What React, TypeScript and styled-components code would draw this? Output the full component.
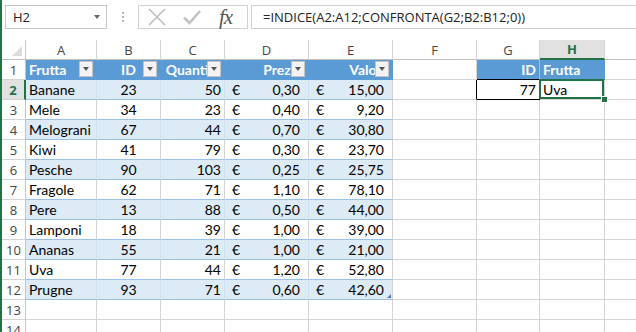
import styled, { createGlobalStyle } from 'styled-components';

const GREEN = '#217346';
const BLUE = '#5b9bd5';
const BAND = '#ddebf7';
const BAND_SIDE = '#cfe0f1';
const LINE = '#9bc2e6';
const GRID = '#d4d4d4';

const GlobalStyle = createGlobalStyle`
  html, body {
    margin: 0;
    padding: 0;
    background: #fff;
  }
  body {
    font-family: Lato, 'Liberation Sans', sans-serif;
  }
`;

type Align = 'left' | 'center' | 'right';

const Window = styled.div`
  width: 636px;
  height: 332px;
  box-sizing: border-box;
  border-left: 2px solid ${GREEN};
  overflow: hidden;
  display: flex;
  flex-direction: column;
  background: #fff;
`;

const FormulaBar = styled.div`
  height: 40px;
  flex-shrink: 0;
  display: flex;
  align-items: flex-start;
  padding: 5px 0 0 3px;
  box-sizing: border-box;
`;

const NameBox = styled.div`
  width: 102px;
  height: 24px;
  box-sizing: border-box;
  border: 1px solid #c6c6c6;
  display: flex;
  align-items: center;
  justify-content: space-between;
  padding: 0 6px 0 7px;
  font-family: 'Open Sans', sans-serif;
  font-size: 13px;
  color: #222;
`;

const Caret = styled.span`
  width: 0;
  height: 0;
  border-left: 3.5px solid transparent;
  border-right: 3.5px solid transparent;
  border-top: 4px solid #666;
`;

const Grip = styled.div`
  width: 31px;
  height: 24px;
  display: flex;
  flex-direction: column;
  align-items: center;
  justify-content: center;
  gap: 2px;

  span {
    width: 2px;
    height: 2px;
    background: #b8b8b8;
  }
`;

const FuncBox = styled.div`
  width: 110px;
  height: 24px;
  box-sizing: border-box;
  border: 1px solid #d0d0d0;
  display: flex;
  align-items: center;
  padding: 0 8px 0 8px;
  gap: 15px;
`;

const Fx = styled.span`
  font-family: 'Liberation Serif', serif;
  font-style: italic;
  font-size: 21px;
  color: #555;
  letter-spacing: -1px;
  margin-left: 2px;
  line-height: 20px;
`;

const FormulaInput = styled.div`
  flex: 1;
  height: 24px;
  margin-left: 3px;
  box-sizing: border-box;
  border: 1px solid #d0d0d0;
  border-right: none;
  padding-left: 11px;
  display: flex;
  align-items: center;
  font-family: 'Open Sans', sans-serif;
  font-size: 13px;
  color: #222;
  white-space: nowrap;
`;

const Sheet = styled.div`
  display: grid;
  grid-template-columns: 24px 71px 64px 64px 84px 84px 84px 63px 65px 64px;
  grid-auto-rows: 20px;
`;

const Corner = styled.div`
  position: relative;
  box-sizing: border-box;
  border-right: 1px solid #c6c6c6;
  border-bottom: 1px solid #bfbfbf;

  &::after {
    content: '';
    position: absolute;
    right: 3px;
    bottom: 3px;
    border-left: 10px solid transparent;
    border-bottom: 10px solid #dcdcdc;
  }
`;

const ColHead = styled.div<{ $active?: boolean }>`
  box-sizing: border-box;
  border-right: 1px solid ${GRID};
  border-bottom: ${({ $active }) => ($active ? `2px solid ${GREEN}` : '1px solid #bfbfbf')};
  background: ${({ $active }) => ($active ? '#e1e1e1' : '#fff')};
  color: ${({ $active }) => ($active ? GREEN : '#444')};
  font-weight: ${({ $active }) => ($active ? 700 : 400)};
  font-family: 'Open Sans', sans-serif;
  font-size: 13px;
  display: flex;
  align-items: center;
  justify-content: center;
`;

const RowHead = styled.div<{ $active?: boolean }>`
  box-sizing: border-box;
  border-right: ${({ $active }) => ($active ? `2px solid ${GREEN}` : '1px solid #c6c6c6')};
  border-bottom: 1px solid ${GRID};
  background: ${({ $active }) => ($active ? '#e1e1e1' : '#fff')};
  color: ${({ $active }) => ($active ? GREEN : '#444')};
  font-weight: ${({ $active }) => ($active ? 700 : 400)};
  font-family: 'Open Sans', sans-serif;
  font-size: 13px;
  display: flex;
  align-items: center;
  justify-content: center;
`;

const Cell = styled.div<{
  $fill?: string;
  $align?: Align;
  $bold?: boolean;
  $color?: string;
  $line?: string;
  $side?: string;
}>`
  position: relative;
  box-sizing: border-box;
  padding: 0 3px;
  border-right: 1px solid ${({ $side }) => $side || GRID};
  border-bottom: 1px solid ${({ $line }) => $line || GRID};
  background: ${({ $fill }) => $fill || '#fff'};
  color: ${({ $color }) => $color || '#000'};
  font-weight: ${({ $bold }) => ($bold ? 700 : 400)};
  font-family: Lato, 'Liberation Sans', sans-serif;
  font-size: 14px;
  line-height: 20px;
  text-align: ${({ $align }) => $align || 'left'};
  white-space: nowrap;
  overflow: hidden;
`;

const MoneyCell = styled(Cell)<{ $handle?: boolean }>`
  display: flex;
  justify-content: space-between;
  padding: 0 8px 0 7px;
  overflow: visible;

  ${({ $handle }) =>
    $handle &&
    `
    &::after {
      content: '';
      position: absolute;
      right: 1px;
      bottom: 1px;
      border-left: 4px solid transparent;
      border-bottom: 4px solid #4a76b0;
    }
  `}
`;

const SelectedCell = styled(Cell)`
  overflow: visible;

  &::after {
    content: '';
    position: absolute;
    top: -1px;
    left: -1px;
    right: 0;
    bottom: 0;
    border: 2px solid ${GREEN};
    z-index: 2;
  }

  &::before {
    content: '';
    position: absolute;
    right: -4px;
    bottom: -4px;
    width: 5px;
    height: 5px;
    background: ${GREEN};
    border: 1px solid #fff;
    z-index: 3;
  }
`;

const FilterBtn = styled.span`
  position: absolute;
  right: 3px;
  top: 1px;
  width: 14px;
  height: 16px;
  box-sizing: border-box;
  background: #f3f3f3;
  border: 1px solid #c4c4c4;
  display: flex;
  align-items: center;
  justify-content: center;

  &::after {
    content: '';
    border-left: 3.5px solid transparent;
    border-right: 3.5px solid transparent;
    border-top: 4px solid #555;
  }
`;

type Fruit = [string, number, number, string, string];

const fruits: Fruit[] = [
  ['Banane', 23, 50, '0,30', '15,00'],
  ['Mele', 34, 23, '0,40', '9,20'],
  ['Melograni', 67, 44, '0,70', '30,80'],
  ['Kiwi', 41, 79, '0,30', '23,70'],
  ['Pesche', 90, 103, '0,25', '25,75'],
  ['Fragole', 62, 71, '1,10', '78,10'],
  ['Pere', 13, 88, '0,50', '44,00'],
  ['Lamponi', 18, 39, '1,00', '39,00'],
  ['Ananas', 55, 21, '1,00', '21,00'],
  ['Uva', 77, 44, '1,20', '52,80'],
  ['Prugne', 93, 71, '0,60', '42,60'],
];

const letters = ['A', 'B', 'C', 'D', 'E', 'F', 'G', 'H', ''];

const headers: [string, Align][] = [
  ['Frutta', 'left'],
  ['ID', 'center'],
  ['Quantità', 'right'],
  ['Prezzo', 'right'],
  ['Valore', 'right'],
];

function HeaderRow() {
  return (
    <>
      <RowHead>1</RowHead>
      {headers.map(([label, align]) => (
        <Cell key={label} $fill={BLUE} $side={BLUE} $line={BLUE} $color="#fff" $bold $align={align}>
          {label}
          <FilterBtn />
        </Cell>
      ))}
      <Cell />
      <Cell $fill={BLUE} $side={LINE} $line="#000" $color="#fff" $bold $align="right">ID</Cell>
      <Cell $fill={BLUE} $side={BLUE} $line={BLUE} $color="#fff" $bold>Frutta</Cell>
      <Cell />
    </>
  );
}

function DataRow({ row, fruit }: { row: number; fruit: Fruit }) {
  const [name, id, qty, price, value] = fruit;
  const band = row % 2 === 0;
  const fill = band ? BAND : '#fff';
  const side = band ? BAND_SIDE : GRID;
  const first = row === 2;
  return (
    <>
      <RowHead $active={first}>{row}</RowHead>
      <Cell $fill={fill} $side={side} $line={LINE}>{name}</Cell>
      <Cell $fill={fill} $side={side} $line={LINE} $align="center">{id}</Cell>
      <Cell $fill={fill} $side={side} $line={LINE} $align="right">{qty}</Cell>
      <MoneyCell $fill={fill} $side={side} $line={LINE}>
        <span>€</span>
        <span>{price}</span>
      </MoneyCell>
      <MoneyCell $fill={fill} $line={LINE} $handle={row === 12}>
        <span>€</span>
        <span>{value}</span>
      </MoneyCell>
      <Cell $side={first ? '#000' : GRID} />
      {first ? (
        <Cell $side="#000" $line="#000" $align="right">77</Cell>
      ) : (
        <Cell />
      )}
      {first ? <SelectedCell>Uva</SelectedCell> : <Cell />}
      <Cell />
    </>
  );
}

function EmptyRow({ row }: { row: number }) {
  return (
    <>
      <RowHead>{row}</RowHead>
      {letters.map((l, i) => (
        <Cell key={i} />
      ))}
    </>
  );
}

export default function App() {
  return (
    <>
      <GlobalStyle />
      <Window>
        <FormulaBar>
          <NameBox>
            H2
            <Caret />
          </NameBox>
          <Grip>
            <span />
            <span />
            <span />
          </Grip>
          <FuncBox>
            <svg width="20" height="18" viewBox="0 0 20 18">
              <path d="M2 1 L18 17 M18 1 L2 17" stroke="#bdbdbd" strokeWidth="1.6" fill="none" />
            </svg>
            <svg width="20" height="18" viewBox="0 0 20 18">
              <path d="M2 9.5 L7.5 15 L18 3" stroke="#c4c4c4" strokeWidth="2.6" fill="none" />
            </svg>
            <Fx>fx</Fx>
          </FuncBox>
          <FormulaInput>=INDICE(A2:A12;CONFRONTA(G2;B2:B12;0))</FormulaInput>
        </FormulaBar>
        <Sheet>
          <Corner />
          {letters.map((l, i) => (
            <ColHead key={i} $active={l === 'H'}>{l}</ColHead>
          ))}
          <HeaderRow />
          {fruits.map((f, i) => (
            <DataRow key={i} row={i + 2} fruit={f} />
          ))}
          <EmptyRow row={13} />
          <EmptyRow row={14} />
        </Sheet>
      </Window>
    </>
  );
}
